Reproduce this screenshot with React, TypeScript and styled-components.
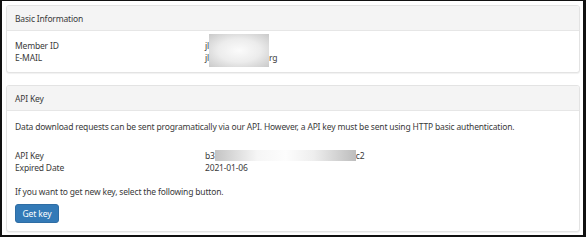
import styled, { createGlobalStyle } from "styled-components";

// #region ##################################################################################### STYLES
const Global = createGlobalStyle`
  html, body {
    margin: 0;
    padding: 0;
    background: #fff;
  }
  body {
    font-family: "Noto Sans", "Liberation Sans", sans-serif;
    font-size: 8.5px;
    letter-spacing: -0.17px;
    color: #3a3a3a;
  }
`;

const Frame = styled.div`
  box-sizing: border-box;
  width: 586px;
  height: 237px;
  border: 2px solid #111;
  border-top-width: 1px;
  border-right-width: 3px;
  padding: 4px 3px 0 4px;
  display: flex;
  flex-direction: column;
  gap: 12px;
`;

const Panel = styled.section`
  border: 1px solid #e3e3e3;
  border-radius: 3px;
  background: #fff;
  box-shadow: 0 1px 1px rgba(0, 0, 0, 0.06);
  overflow: hidden;
`;

const Heading = styled.div`
  height: 24px;
  padding: 0 8px;
  display: flex;
  align-items: center;
  background: #f4f4f4;
  border-bottom: 1px solid #e6e6e6;
`;

const Body = styled.div<{ $top: number; $bottom: number }>`
  padding: ${(p) => p.$top}px 8px ${(p) => p.$bottom}px;
  line-height: 12px;
`;

const Row = styled.div`
  display: grid;
  grid-template-columns: 190px 1fr;
  height: 12px;
`;

const Value = styled.div`
  position: relative;
  display: flex;
  align-items: center;
`;

const Note = styled.p<{ $mt?: number }>`
  margin: ${(p) => p.$mt ?? 0}px 0 0;
`;

const Fields = styled.div<{ $mt?: number }>`
  margin-top: ${(p) => p.$mt ?? 0}px;
`;

const BlurBox = styled.span<{ $w: number; $h: number; $top: number; $left: number }>`
  position: absolute;
  left: ${(p) => p.$left}px;
  top: ${(p) => p.$top}px;
  width: ${(p) => p.$w}px;
  height: ${(p) => p.$h}px;
  background: radial-gradient(ellipse at center, #fbfbfb 0%, #ececec 50%, #c9c9c9 100%);
`;

const BlurBar = styled.span<{ $w: number; $left: number }>`
  position: absolute;
  left: ${(p) => p.$left}px;
  top: 0;
  width: ${(p) => p.$w}px;
  height: 11px;
  background: linear-gradient(90deg, #c4c4c4 0%, #f6f6f6 30%, #fdfdfd 50%, #eeeeee 70%, #bdbdbd 100%);
`;

const Tail = styled.span<{ $gap: number }>`
  margin-left: ${(p) => p.$gap}px;
`;

const Button = styled.button`
  margin-top: 6px;
  height: 19px;
  width: 44px;
  padding: 0;
  border: 1px solid #2e6da4;
  border-radius: 3px;
  background: #337ab7;
  color: #fff;
  font-family: inherit;
  font-size: 8.5px;
  letter-spacing: -0.1px;
  cursor: pointer;
`;
// #endregion

// #region ##################################################################################### COMPONENT
const App = () => {
  return (
    <>
      <Global />
      <Frame>
        <Panel>
          <Heading>Basic Information</Heading>
          <Body $top={9} $bottom={8}>
            <Row>
              <span>Member ID</span>
              <Value>
                jl
                <BlurBox $left={4} $top={-6} $w={60} $h={33} />
              </Value>
            </Row>
            <Row>
              <span>E-MAIL</span>
              <Value>
                jl<Tail $gap={60}>rg</Tail>
              </Value>
            </Row>
          </Body>
        </Panel>

        <Panel>
          <Heading>API Key</Heading>
          <Body $top={10} $bottom={8}>
            <Note>
              Data download requests can be sent programatically via our API. However, a API key
              must be sent using HTTP basic authentication.
            </Note>
            <Fields $mt={17}>
              <Row>
                <span>API Key</span>
                <Value>
                  b3
                  <BlurBar $left={10} $w={141} />
                  <Tail $gap={141}>c2</Tail>
                </Value>
              </Row>
              <Row>
                <span>Expired Date</span>
                <Value>2021-01-06</Value>
              </Row>
            </Fields>
            <Note $mt={12}>If you want to get new key, select the following button.</Note>
            <Button>Get key</Button>
          </Body>
        </Panel>
      </Frame>
    </>
  );
};
// #endregion

// #region ##################################################################################### EXPORTS
export default App;
// #endregion
